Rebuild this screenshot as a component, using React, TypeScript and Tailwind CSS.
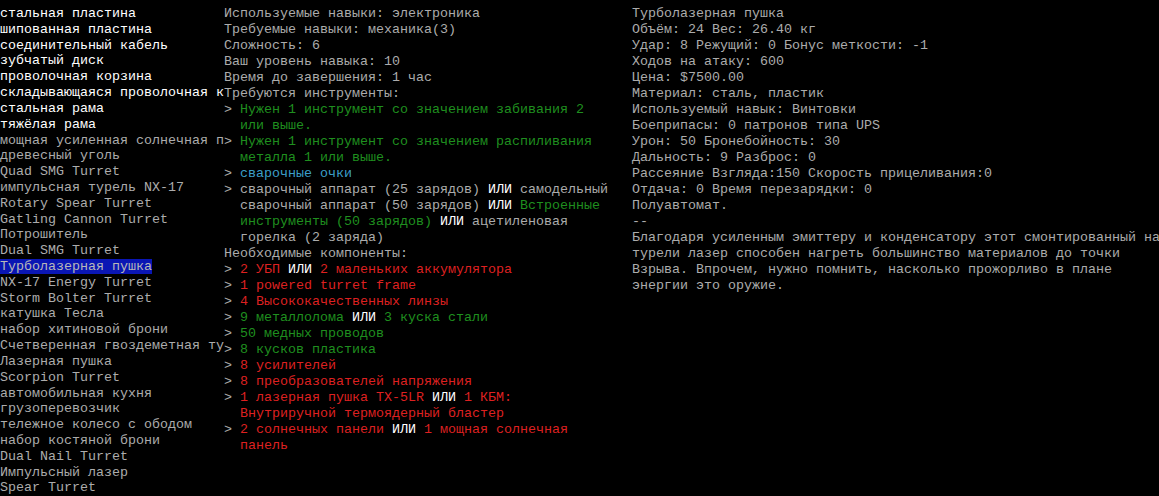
import React from 'react';

type Seg = [string, string];

const C = {
  w: 'text-white',
  g: 'text-[#acacac]',
  gr: 'text-[#1f8f1f]',
  cy: 'text-[#3c9fc8]',
  r: 'text-[#de2020]',
};

const recipes: { name: string; bright?: boolean }[] = [
  { name: 'стальная пластина', bright: true },
  { name: 'шипованная пластина', bright: true },
  { name: 'соединительный кабель', bright: true },
  { name: 'зубчатый диск', bright: true },
  { name: 'проволочная корзина', bright: true },
  { name: 'складывающаяся проволочная корзина', bright: true },
  { name: 'стальная рама', bright: true },
  { name: 'тяжёлая рама', bright: true },
  { name: 'мощная усиленная солнечная панель' },
  { name: 'древесный уголь' },
  { name: 'Quad SMG Turret' },
  { name: 'импульсная турель NX-17' },
  { name: 'Rotary Spear Turret' },
  { name: 'Gatling Cannon Turret' },
  { name: 'Потрошитель' },
  { name: 'Dual SMG Turret' },
  { name: 'Турболазерная пушка' },
  { name: 'NX-17 Energy Turret' },
  { name: 'Storm Bolter Turret' },
  { name: 'катушка Тесла' },
  { name: 'набор хитиновой брони' },
  { name: 'Счетверенная гвоздеметная турель' },
  { name: 'Лазерная пушка' },
  { name: 'Scorpion Turret' },
  { name: 'автомобильная кухня' },
  { name: 'грузоперевозчик' },
  { name: 'тележное колесо с ободом' },
  { name: 'набор костяной брони' },
  { name: 'Dual Nail Turret' },
  { name: 'Импульсный лазер' },
  { name: 'Spear Turret' },
];

const selected = 16;

// middle column: each line is a list of [color, text]
const details: Seg[][] = [
  [[C.g, 'Используемые навыки: электроника']],
  [[C.g, 'Требуемые навыки: механика(3)']],
  [[C.g, 'Сложность: 6']],
  [[C.g, 'Ваш уровень навыка: 10']],
  [[C.g, 'Время до завершения: 1 час']],
  [[C.g, 'Требуются инструменты:']],
  [[C.g, '> '], [C.gr, 'Нужен 1 инструмент со значением забивания 2']],
  [[C.g, '  '], [C.gr, 'или выше.']],
  [[C.g, '> '], [C.gr, 'Нужен 1 инструмент со значением распиливания']],
  [[C.g, '  '], [C.gr, 'металла 1 или выше.']],
  [[C.g, '> '], [C.cy, 'сварочные очки']],
  [[C.g, '> сварочный аппарат (25 зарядов) '], [C.w, 'ИЛИ'], [C.g, ' самодельный']],
  [[C.g, '  сварочный аппарат (50 зарядов) '], [C.w, 'ИЛИ'], [C.gr, ' Встроенные']],
  [[C.g, '  '], [C.gr, 'инструменты (50 зарядов) '], [C.w, 'ИЛИ'], [C.g, ' ацетиленовая']],
  [[C.g, '  горелка (2 заряда)']],
  [[C.g, 'Необходимые компоненты:']],
  [[C.g, '> '], [C.r, '2 УБП '], [C.w, 'ИЛИ'], [C.r, ' 2 маленьких аккумулятора']],
  [[C.g, '> '], [C.r, '1 powered turret frame']],
  [[C.g, '> '], [C.r, '4 Высококачественных линзы']],
  [[C.g, '> '], [C.gr, '9 металлолома '], [C.w, 'ИЛИ'], [C.gr, ' 3 куска стали']],
  [[C.g, '> '], [C.gr, '50 медных проводов']],
  [[C.g, '> '], [C.gr, '8 кусков пластика']],
  [[C.g, '> '], [C.r, '8 усилителей']],
  [[C.g, '> '], [C.r, '8 преобразователей напряжения']],
  [[C.g, '> '], [C.r, '1 лазерная пушка TX-5LR '], [C.w, 'ИЛИ'], [C.r, ' 1 КБМ:']],
  [[C.g, '  '], [C.r, 'Внутриручной термоядерный бластер']],
  [[C.g, '> '], [C.r, '2 солнечных панели '], [C.w, 'ИЛИ'], [C.r, ' 1 мощная солнечная']],
  [[C.g, '  '], [C.r, 'панель']],
];

const info = [
  'Турболазерная пушка',
  'Объём: 24 Вес: 26.40 кг',
  'Удар: 8 Режущий: 0 Бонус меткости: -1',
  'Ходов на атаку: 600',
  'Цена: $7500.00',
  'Материал: сталь, пластик',
  'Используемый навык: Винтовки',
  'Боеприпасы: 0 патронов типа UPS',
  'Урон: 50 Бронебойность: 30',
  'Дальность: 9 Разброс: 0',
  'Рассеяние Взгляда:150 Скорость прицеливания:0',
  'Отдача: 0 Время перезарядки: 0',
  'Полуавтомат.',
  '--',
  'Благодаря усиленным эмиттеру и конденсатору этот смонтированный на',
  'турели лазер способен нагреть большинство материалов до точки',
  'Взрыва. Впрочем, нужно помнить, насколько прожорливо в плане',
  'энергии это оружие.',
];

export default function App() {
  return (
    <div className="w-[1159px] h-[496px] overflow-hidden bg-black pt-[6px] flex font-['Liberation_Mono','DejaVu_Sans_Mono',monospace] text-[13.333px] leading-4">
      {/* recipe list */}
      <div className="w-[224px] shrink-0 flex flex-col">
        {recipes.map((r, i) => (
          <div key={i} className="h-4 overflow-hidden whitespace-pre">
            {i === selected ? (
              <span className="bg-[#0a16b4] text-[#b8b8b8]">{r.name}</span>
            ) : (
              <span className={r.bright ? C.w : C.g}>{r.name}</span>
            )}
          </div>
        ))}
      </div>

      {/* requirements */}
      <div className="w-[408px] shrink-0 flex flex-col">
        {details.map((line, i) => (
          <div key={i} className="h-4 whitespace-pre">
            {line.map(([cls, text], j) => (
              <span key={j} className={cls}>{text}</span>
            ))}
          </div>
        ))}
      </div>

      {/* item info */}
      <div className="flex-1 flex flex-col">
        {info.map((t, i) => (
          <div key={i} className={`h-4 whitespace-pre ${C.g}`}>{t}</div>
        ))}
      </div>
    </div>
  );
}
